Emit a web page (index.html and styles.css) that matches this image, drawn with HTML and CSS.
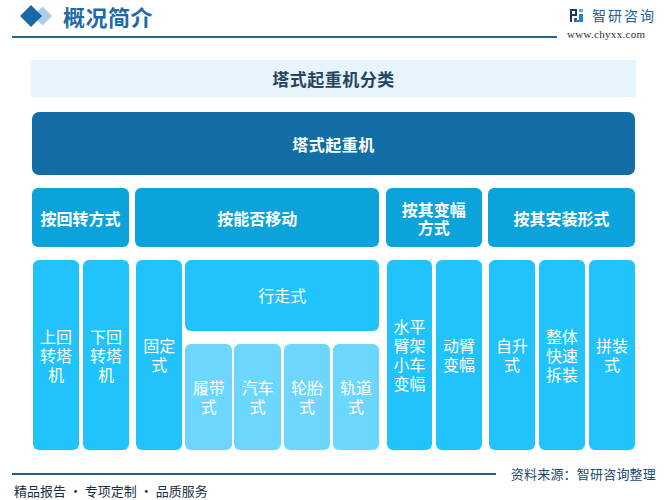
FILE: index.html
```html
<!DOCTYPE html>
<html lang="zh">
<head>
<meta charset="utf-8">
<title>概况简介</title>
<link rel="stylesheet" href="styles.css">
</head>
<body>
<header class="top">
  <div class="top-left">
    <svg class="diamonds" width="33" height="24" viewBox="0 0 33 24">
      <polygon points="22.5,2.5 32,12 22.5,21.5 13,12" fill="#a9cde8"/>
      <polygon points="11,1 22,12 11,23 0,12" fill="#1a66a6"/>
    </svg>
    <h1 class="page-title">概况简介</h1>
  </div>
  <div class="brand">
    <div class="brand-row">
      <svg class="brand-icon" width="13" height="13" viewBox="0 0 13 13">
        <rect x="0" y="0" width="7" height="2" fill="#23336e"/>
        <rect x="0" y="0" width="2" height="13" fill="#23336e"/>
        <rect x="5" y="0" width="2" height="7" fill="#23336e"/>
        <rect x="2" y="5" width="5" height="2" fill="#23336e"/>
        <rect x="4" y="9" width="3" height="4" fill="#2a5aa8"/>
        <rect x="9" y="0" width="4" height="3" fill="#5fa8e6"/>
        <rect x="9" y="5" width="4" height="8" fill="#2f7fd0"/>
        <rect x="6" y="11" width="7" height="2" fill="#2f7fd0"/>
      </svg>
      <span class="brand-name">智研咨询</span>
    </div>
    <div class="brand-url">www.chyxx.com</div>
  </div>
</header>

<main class="chart">
  <div class="chart-title">塔式起重机分类</div>
  <div class="root-box">塔式起重机</div>

  <div class="groups">
    <section class="group g1">
      <div class="cat">按回转方式</div>
      <div class="leaves gap4">
        <div class="leaf"><span class="v">上回转塔机</span></div>
        <div class="leaf"><span class="v">下回转塔机</span></div>
      </div>
    </section>

    <section class="group g2">
      <div class="cat">按能否移动</div>
      <div class="leaves gap3">
        <div class="leaf fixed"><span class="v">固定式</span></div>
        <div class="moving">
          <div class="leaf moving-head">行走式</div>
          <div class="subleaves">
            <div class="leaf sub"><span class="v">履带式</span></div>
            <div class="leaf sub"><span class="v">汽车式</span></div>
            <div class="leaf sub"><span class="v">轮胎式</span></div>
            <div class="leaf sub"><span class="v">轨道式</span></div>
          </div>
        </div>
      </div>
    </section>

    <section class="group g3">
      <div class="cat"><span class="c4">按其变幅方式</span></div>
      <div class="leaves gap4">
        <div class="leaf"><span class="v">水平臂架小车变幅</span></div>
        <div class="leaf"><span class="v">动臂变幅</span></div>
      </div>
    </section>

    <section class="group g4">
      <div class="cat">按其安装形式</div>
      <div class="leaves gap4">
        <div class="leaf"><span class="v">自升式</span></div>
        <div class="leaf"><span class="v">整体快速拆装</span></div>
        <div class="leaf"><span class="v">拼装式</span></div>
      </div>
    </section>
  </div>
</main>

<footer class="foot">
  <div class="foot-row">
    <div class="foot-line"></div>
    <div class="source">资料来源：智研咨询整理</div>
  </div>
  <div class="slogan">精品报告 · 专项定制 · 品质服务</div>
</footer>
</body>
</html>
```

FILE: styles.css
```css
* { box-sizing: border-box; }

html, body {
  margin: 0;
  padding: 0;
  background: #ffffff;
}

body {
  width: 668px;
  height: 500px;
  overflow: hidden;
  font-family: "Noto Sans CJK SC", "Noto Sans", sans-serif;
}

/* ---------- header ---------- */
.top {
  display: flex;
  align-items: flex-start;
  height: 38px;
}

.top-left {
  flex: 1;
  margin-left: 12px;
  height: 38px;
  border-bottom: 2px solid #1e6789;
  display: flex;
  align-items: center;
  padding-left: 8px;
}

.diamonds {
  display: block;
  margin-right: 10px;
  margin-top: -4px;
}

.page-title {
  margin: 0;
  margin-top: -5px;
  font-size: 22px;
  line-height: 26px;
  font-weight: 700;
  color: #1f6aa5;
  letter-spacing: 0.5px;
}

.brand {
  width: 101px;
  margin-left: 10px;
  padding-top: 7px;
}

.brand-row {
  display: flex;
  align-items: center;
  padding-left: 3px;
  height: 16px;
}

.brand-icon {
  display: block;
  margin-right: 9px;
}

.brand-name {
  font-size: 14px;
  line-height: 16px;
  color: #1b5f9e;
  letter-spacing: 2px;
}

.brand-url {
  margin-top: 5px;
  font-family: "Liberation Serif", serif;
  font-size: 11px;
  line-height: 12px;
  color: #2a3340;
  letter-spacing: 0.3px;
}

/* ---------- chart ---------- */
.chart {
  margin: 22px 33px 0 32px;
}

.chart-title {
  height: 37px;
  margin: 0 -1px;
  background: #e8f4fb;
  color: #24445f;
  font-size: 17px;
  font-weight: 700;
  display: flex;
  align-items: center;
  justify-content: center;
  letter-spacing: 0.5px;
}

.root-box {
  margin-top: 15px;
  height: 63px;
  background: #136ea6;
  border-radius: 7px;
  color: #ffffff;
  font-size: 16px;
  font-weight: 700;
  display: flex;
  align-items: center;
  justify-content: center;
  letter-spacing: 0.5px;
}

.groups {
  margin-top: 13px;
  display: flex;
  justify-content: space-between;
}

.group {
  display: flex;
  flex-direction: column;
  gap: 13px;
}

.g1 { width: 97px; }
.g2 { width: 244px; }
.g3 { width: 96px; }
.g4 { width: 147px; }

.cat {
  height: 59px;
  background: #0ba3da;
  border-radius: 6px;
  color: #ffffff;
  font-size: 16px;
  font-weight: 700;
  line-height: 18px;
  display: flex;
  align-items: center;
  justify-content: center;
  text-align: center;
}

.c4 {
  width: 4em;
  display: block;
}

.leaves {
  height: 190px;
  display: flex;
  padding-left: 1px;
}

.gap4 { gap: 4px; }
.gap3 { gap: 3px; }

.leaf {
  flex: 1;
  background: #20c3fb;
  border-radius: 6px;
  color: #ffffff;
  font-size: 16px;
  line-height: 19px;
  display: flex;
  align-items: center;
  justify-content: center;
  text-align: center;
}

.v {
  display: block;
  width: 2em;
}

.fixed {
  flex: 0 0 46px;
}

.moving {
  flex: 1;
  display: flex;
  flex-direction: column;
  gap: 13px;
}

.moving-head {
  flex: 0 0 71px;
}

.subleaves {
  flex: 1;
  display: flex;
  gap: 2.5px;
}

.sub {
  background: #6dd6fc;
}

/* ---------- footer ---------- */
.foot {
  margin-top: 15px;
}

.foot-row {
  display: flex;
  align-items: center;
  height: 17px;
}

.foot-line {
  flex: 1;
  margin-left: 12px;
  height: 2px;
  background: #1f6485;
}

.source {
  margin-left: 15px;
  margin-right: 12px;
  font-size: 13px;
  line-height: 17px;
  color: #1d4b6f;
  letter-spacing: 0.2px;
}

.slogan {
  margin-left: 14px;
  font-size: 13px;
  line-height: 17px;
  color: #1b2f44;
}
```
